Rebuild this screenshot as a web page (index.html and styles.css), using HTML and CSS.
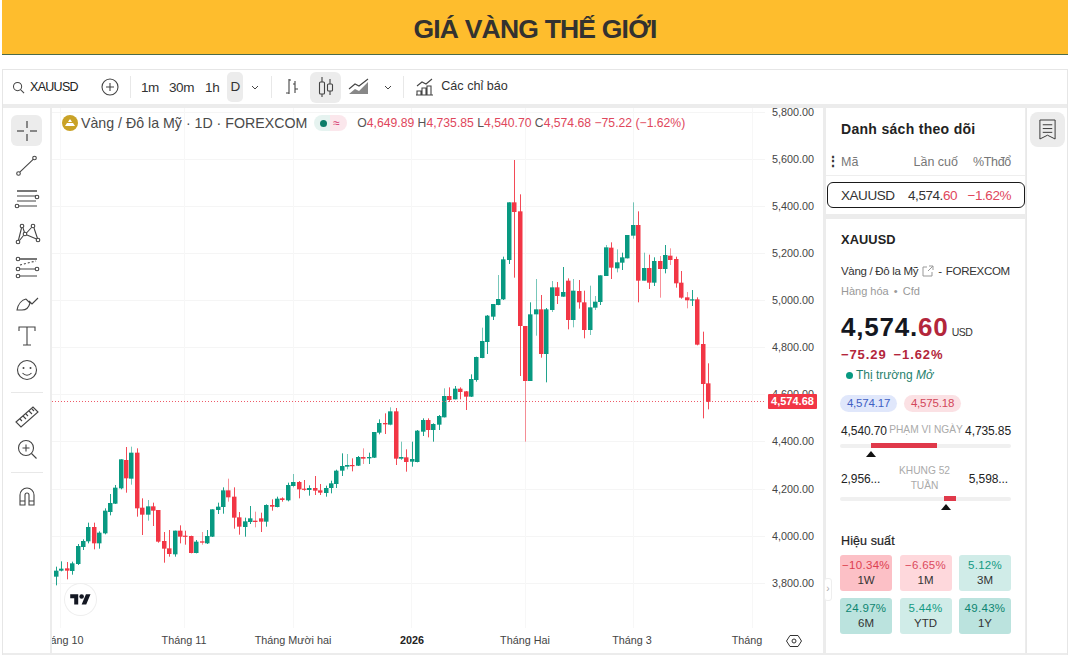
FILE: index.html
```html
<!DOCTYPE html>
<html lang="vi">
<head>
<meta charset="utf-8">
<title>Giá vàng thế giới</title>
<link rel="stylesheet" href="styles.css">
</head>
<body>
<header class="banner"><h1>GIÁ VÀNG THẾ GIỚI</h1></header>
<section class="widget">
  <div class="topbar">
    <svg class="ti search" viewBox="0 0 14 14"><circle cx="6" cy="6" r="4.4"/><path d="M9.2 9.2 13 13"/></svg>
    <span class="symbol">XAUUSD</span>
    <svg class="ti plus" viewBox="0 0 18 18"><circle cx="9" cy="9" r="8"/><path d="M9 5v8M5 9h8"/></svg>
    <i class="sep sep-a"></i>
    <span class="iv iv-1">1m</span><span class="iv iv-2">30m</span><span class="iv iv-3">1h</span><span class="iv-on">D</span>
    <svg class="ti chev" viewBox="0 0 8 5"><path d="M1 1l3 3 3-3"/></svg>
    <i class="sep sep-b"></i>
    <svg class="ti bars" viewBox="0 0 18 20"><path d="M7 2v15M7 3h2M7 16H4M13 4v12M13 12h3M13 7h-2"/></svg>
    <span class="cbtn"><svg class="ti" width="18" height="22" viewBox="0 0 18 22"><path d="M5 1v5M5 18v3M13 3v5M13 15v4"/><rect x="2.500" y="6" width="5" height="12" rx="1"/><rect x="10.500" y="8" width="5" height="7" rx="1"/></svg></span>
    <svg class="ti area" viewBox="0 0 22 18"><path class="fill" d="M1 16l6-5 4 2 9-9v12z"/><path d="M1 11l6-5 4 2 9-7"/></svg>
    <svg class="ti chev chev-b" viewBox="0 0 8 5"><path d="M1 1l3 3 3-3"/></svg>
    <i class="sep sep-c"></i>
    <svg class="ti ind" viewBox="0 0 20 20"><path d="M2 9l5-4 4 2 6-5M2 18v-4h4v4M7 18V11h4v7M12 18V9h4v9M1 18h17"/></svg>
    <span class="indlabel">Các chỉ báo</span>
  </div>
  <div class="main">
    <nav class="tools">
      <span class="tool tool-on"><svg viewBox="0 0 28 28"><path d="M14 4v7M14 17v7M4 14h7M17 14h7"/></svg></span>
      <span class="tool"><svg viewBox="0 0 28 28"><circle cx="5.500" cy="21.500" r="1.800"/><circle cx="21.500" cy="6" r="1.800"/><path d="M6.800 20.200 20.200 7.300"/></svg></span>
      <span class="tool"><svg viewBox="0 0 28 28"><path class="thick" d="M4 5h20"/><path d="M4 10h19M4 15h19M6 20h18"/><circle cx="24" cy="11" r="1.800"/><circle cx="4" cy="20" r="1.800"/></svg></span>
      <span class="tool"><svg viewBox="0 0 28 28"><circle cx="5" cy="22" r="1.800"/><circle cx="9" cy="6" r="1.800"/><circle cx="12" cy="14" r="1.800"/><circle cx="20" cy="6" r="1.800"/><circle cx="25" cy="20" r="1.800"/><path d="M5.500 20 8.500 8M6.500 20.500 10.500 15.500M10 8l1.500 4.500M13.500 13 18.500 7.500M21 8l3.500 10.500M14 15l9.500 4"/></svg></span>
      <span class="tool"><svg viewBox="0 0 28 28"><circle cx="5" cy="5" r="1.800"/><circle cx="5" cy="15" r="1.800"/><circle cx="24" cy="15" r="1.800"/><circle cx="5" cy="22" r="1.800"/><path class="thick" d="M7 5h17"/><path class="dash" d="M7 11l16-4"/><path d="M7 15h15M7 22h17"/></svg></span>
      <span class="tool"><svg viewBox="0 0 28 28"><path d="M4 22C5 16 9 12 13 11l4 4c-1 4-4 7-8 7zM16 13l3 3 6-6"/></svg></span>
      <span class="tool"><svg viewBox="0 0 28 28"><path d="M6 9V5h16v4M14 5v18M10 23h8"/></svg></span>
      <span class="tool"><svg viewBox="0 0 28 28"><circle cx="14" cy="14" r="9.500"/><circle class="dot" cx="10.500" cy="12" r="1"/><circle class="dot" cx="17.500" cy="12" r="1"/><path d="M9.500 17c2.500 3 6.500 3 9 0"/></svg></span>
      <i class="tsep"></i>
      <span class="tool"><svg viewBox="0 0 28 28"><path d="M3 20 20 5l5 5-17 15zM7 17l2 2M10 14l3 3M13 12l2 2M16 9l3 3M19 7l2 2"/></svg></span>
      <span class="tool"><svg viewBox="0 0 28 28"><circle cx="13" cy="12" r="7.500"/><path d="M13 8.500v7M9.500 12h7M18.500 17.500l5 5"/></svg></span>
      <i class="tsep"></i>
      <span class="tool"><svg viewBox="0 0 28 28"><path d="M7 23v-10a7 7 0 0 1 14 0v10h-5v-10a2 2 0 0 0-4 0v10zM7 19h5M16 19h5"/></svg></span>
    </nav>
    <div class="chart">
      <svg id="plot" class="plot" viewBox="52 108 771 545" width="771" height="545"></svg>
      <div class="legend">
        <svg class="gold" viewBox="0 0 16 16"><circle cx="8" cy="8" r="8"/><path d="M3 11l2-3h6l2 3zM6 7l1.500-2.500h1L10 7z"/></svg>
        <span class="lname">Vàng / Đô la Mỹ · 1D · FOREXCOM</span>
        <span class="lpill"><b class="ldot"></b><b class="lapprox">≈</b></span>
        <span class="ohlc"><i>O</i>4,649.89 <i>H</i>4,735.85 <i>L</i>4,540.70 <i>C</i>4,574.68 −75.22 (−1.62%)</span>
      </div>
      <div class="tvlogo"><svg viewBox="0 0 36 28"><path d="M14 22H7V11H0V4h14v18zM28 22h-8l7.500-18h8L28 22z"/><circle cx="20" cy="8" r="4"/></svg></div>
      <div class="lastprice">4,574.68</div>
    </div>
    <aside class="side">
      <div class="watch">
        <h2 class="wtitle">Danh sách theo dõi</h2>
        <div class="whead"><span class="wdots">⋮</span><span class="wc1">Mã</span><span class="wc2">Lần cuố</span><span class="wc3">%Thđổ</span></div>
        <div class="wrow"><span class="wc1">XAUUSD</span><span class="wc2">4,574.<em>60</em></span><span class="wc3"><em>−1.62%</em></span></div>
      </div>
      <div class="detail">
        <div class="dsym">XAUUSD</div>
        <div class="dname">Vàng / Đô la Mỹ <svg class="ext" viewBox="0 0 12 12"><path d="M5 2H1v9h9V7M7 1h4v4M11 1 6 6"/></svg> <span class="dash-s">-</span> FOREXCOM</div>
        <div class="dtype">Hàng hóa <span class="bull">•</span> Cfd</div>
        <div class="dprice">4,574.<em>60</em> <small>USD</small></div>
        <div class="dchg"><span>−75.29</span><span>−1.62%</span></div>
        <div class="dmkt"><b></b>Thị trường <i>Mở</i></div>
        <div class="dpills"><span class="pblue">4,574.17</span><span class="ppink">4,575.18</span></div>
        <div class="rrow"><span>4,540.70</span><label>PHẠM VI NGÀY</label><span>4,735.85</span></div>
        <div class="rbar"><i class="rf1"></i></div>
        <div class="tri tri1"></div>
        <div class="rrow rrow2"><span>2,956...</span><label>KHUNG 52 TUẦN</label><span>5,598...</span></div>
        <div class="rbar"><i class="rf2"></i></div>
        <div class="tri tri2"></div>
        <h3 class="perf">Hiệu suất</h3>
        <div class="pgrid">
          <div class="pc r2"><em>−10.34%</em><span>1W</span></div>
          <div class="pc r1"><em>−6.65%</em><span>1M</span></div>
          <div class="pc g1"><em>5.12%</em><span>3M</span></div>
          <div class="pc g2"><em>24.97%</em><span>6M</span></div>
          <div class="pc g1"><em>5.44%</em><span>YTD</span></div>
          <div class="pc g2"><em>49.43%</em><span>1Y</span></div>
        </div>
      </div>
      <div class="handle">›</div>
    </aside>
    <div class="strip">
      <span class="sbtn"><svg viewBox="0 0 20 24"><path d="M2 2h16v20l-8-4-8 4zM5 7h10M5 11h10M5 15h10"/></svg></span>
    </div>
  </div>
</section>
<script src="chart.js"></script>
</body>
</html>
```
FILE: styles.css
```css
* { box-sizing: border-box; }
html, body { margin: 0; height: 655px; overflow: hidden; background: #fff; font-family: "Liberation Sans", Arial, sans-serif; color: #222; }
body { padding-left: 2px; }
em { font-style: normal; }

.banner { height: 55px; background: #febd2d; border-bottom: 1px solid #4d6b4a; display: flex; align-items: center; justify-content: center; }
.banner h1 { margin: 0; font-size: 26.500px; line-height: 1; font-weight: 700; letter-spacing: -0.800px; color: #333230; position: relative; top: 2px; }

.widget { margin-top: 14px; height: 586px; background: #ececec; border: 1px solid #e6e6e6; border-bottom: 0; display: flex; flex-direction: column; }

.topbar { height: 34px; background: #fff; display: flex; align-items: center; flex: none; font-size: 13px; color: #333; }
.ti { fill: none; stroke: #444; stroke-width: 1.1; flex: none; }
.search { width: 13px; height: 13px; margin-left: 9px; }
.symbol { margin-left: 5px; font-size: 12.500px; width: 47px; letter-spacing: -0.700px; color: #222; }
.plus { width: 18px; height: 18px; margin-left: 24px; }
.sep { width: 1px; height: 22px; background: #e8e8e8; flex: none; }
.sep-a { margin: 0 10px 0 11px; }
.sep-b { margin-left: 12px; }
.sep-c { margin-left: 11px; }
.iv { font-size: 13.500px; letter-spacing: -0.400px; }
.iv-1 { margin-right: 10px; }
.iv-2 { margin-right: 11px; }
.iv-3 { margin-right: 8px; }
.iv-on { background: #ececec; border-radius: 5px; height: 30px; line-height: 30px; width: 16px; text-align: center; font-size: 13.500px; }
.chev { width: 8px; height: 5px; margin-left: 8px; stroke-width: 1; }
.chev-b { margin-left: 14px; }
.bars { width: 18px; height: 20px; margin-left: 10px; }
.cbtn { width: 31px; height: 31px; background: #ececec; border-radius: 6px; display: flex; align-items: center; justify-content: center; margin-left: 10px; }
.area { width: 22px; height: 18px; margin-left: 7px; }
.area .fill { fill: #888; stroke: none; }
.ind { width: 20px; height: 20px; margin-left: 11px; }
.indlabel { margin-left: 6px; font-size: 12.600px; position: relative; top: -1px; }

.main { flex: 1; min-height: 0; margin-top: 4px; display: flex; align-items: stretch; }

.tools { width: 47px; flex: none; background: #fff; margin-right: 2px; display: flex; flex-direction: column; align-items: center; padding-top: 7px; height: 545px; }
.tool { width: 31px; height: 31px; flex: none; display: flex; align-items: center; justify-content: center; margin-bottom: 3px; border-radius: 6px; }
.tool svg { width: 28px; height: 28px; fill: none; stroke: #444; stroke-width: 1.100; }
.tool .thick { stroke-width: 2; stroke: #777; }
.tool .dash { stroke-dasharray: 2 2; }
.tool .dot { fill: #444; stroke: none; }
.tool-on { background: #ececec; margin-bottom: 4px; }
.tool-on svg { stroke: #666; stroke-width: 1.500; }
.tsep { width: 32px; height: 1px; background: #e8e8e8; margin: 4px 0 7px; flex: none; }

.chart { width: 771px; height: 545px; flex: none; background: #fff; position: relative; margin-right: 3px; overflow: hidden; }
.plot { display: block; }
.plot text { font-family: "Liberation Sans", Arial, sans-serif; font-size: 10.800px; fill: #444; }
.plot .tm { text-anchor: middle; }
.plot .yr { font-weight: 700; fill: #222; }
.gear { fill: none; stroke: #333; stroke-width: 1; }

.legend { position: absolute; left: 10px; top: 7px; height: 16px; display: flex; align-items: center; white-space: nowrap; }
.gold { width: 16px; height: 16px; fill: #c9a227; flex: none; }
.gold path { fill: #fff; }
.lname { font-size: 14.200px; color: #4a4a4a; margin-left: 3px; }
.lpill { margin-left: 7px; width: 33px; height: 16px; border-radius: 8px; background: linear-gradient(90deg, #e6f3f0 50%, #fbe7ec 50%); display: flex; align-items: center; }
.ldot { width: 7px; height: 7px; border-radius: 50%; background: #0c7d68; margin-left: 6px; }
.lapprox { color: #d6336c; font-size: 12px; margin-left: 6px; font-weight: 400; }
.ohlc { margin-left: 10px; font-size: 12.200px; color: #e0475c; }
.ohlc i { font-style: normal; color: #555; }

.tvlogo { position: absolute; left: 13px; top: 476px; width: 31px; height: 31px; border-radius: 50%; background: #fff; box-shadow: 0 0 0 1px #eee; display: flex; align-items: center; justify-content: center; }
.tvlogo svg { width: 21px; height: 16px; fill: #131722; }
.lastprice { position: absolute; left: 716px; top: 286px; width: 49px; height: 15px; line-height: 15px; background: #f23645; color: #fff; font-size: 11px; font-weight: 700; text-align: center; border-radius: 1px; }

.side { width: 199px; flex: none; height: 545px; display: flex; flex-direction: column; position: relative; background: #ececec; }
.watch { background: #fff; height: 106px; flex: none; position: relative; }
.wtitle { margin: 0; padding: 13px 0 0 15px; font-size: 14px; line-height: 16px; letter-spacing: 0.300px; color: #222; font-weight: 700; }
.whead, .wrow { display: flex; align-items: center; position: relative; }
.whead { margin-top: 12px; height: 27px; color: #777; border-bottom: 1px solid #eee; font-size: 12.500px; }
.wdots { position: absolute; left: 0; top: 4px; font-weight: 700; color: #333; font-size: 14px; }
.wc1 { position: absolute; left: 15px; }
.wc2 { position: absolute; right: 67px; }
.wc3 { position: absolute; right: 14px; letter-spacing: -0.300px; }
.wrow { margin: 6px 0 0 1px; width: 198px; height: 26px; border: 1px solid #1a1a1a; border-radius: 6px; font-size: 13.500px; letter-spacing: -0.450px; color: #333; }
.wrow .wc1 { left: 13px; }
.wrow .wc2 { right: 67px; }
.wrow .wc3 { right: 13px; letter-spacing: -0.450px; }
.wrow em { color: #e0475c; }

.detail { background: #fff; margin-top: 5px; flex: 1; padding: 13px 14px 0 15px; position: relative; }
.dsym { font-size: 12.800px; font-weight: 700; line-height: 16px; color: #222; letter-spacing: 0.100px; }
.dname { margin-top: 15px; font-size: 11.500px; line-height: 16px; letter-spacing: -0.300px; color: #333; display: flex; align-items: center; gap: 4px; white-space: nowrap; }
.ext { width: 12px; height: 12px; fill: none; stroke: #999; stroke-width: 1; flex: none; }
.dtype { margin-top: 4px; font-size: 11px; line-height: 16px; color: #999; }
.bull { margin: 0 2px; }
.dprice { margin-top: 13px; font-size: 26px; line-height: 30px; font-weight: 700; letter-spacing: 0.800px; color: #14171f; white-space: nowrap; }
.dprice em { color: #b3263b; }
.dprice small { font-size: 10.500px; font-weight: 400; letter-spacing: -0.500px; color: #333; margin-left: -5px; }
.dchg { margin-top: 0; font-size: 13px; line-height: 16px; font-weight: 700; color: #b3263b; letter-spacing: 0.900px; display: flex; gap: 7px; }
.dmkt { margin-top: 3px; font-size: 12px; line-height: 18px; color: #1f7f6d; display: flex; align-items: center; gap: 3px; padding-left: 5px; white-space: pre; }
.dmkt b { width: 7px; height: 7px; border-radius: 50%; background: #089981; }
.dmkt i { margin-left: -3px; }
.dpills { margin: 11px 0 0 -1px; display: flex; gap: 7px; font-size: 11.500px; letter-spacing: -0.200px; }
.dpills span { width: 57px; height: 17px; line-height: 17px; border-radius: 9px; text-align: center; }
.pblue { background: #e0e7fb; color: #3f5fc4; }
.ppink { background: #fbe1e4; color: #d2475a; }
.rrow { margin-top: 11px; display: flex; align-items: center; justify-content: space-between; font-size: 12px; line-height: 16px; height: 16px; color: #222; letter-spacing: -0.100px; }
.rrow label { font-size: 10.200px; color: #aaa; letter-spacing: 0; white-space: nowrap; position: relative; top: -1px; }
.rrow2 { margin-top: 7px; height: 30px; padding: 0 3px 0 0; }
.rrow2 label { width: 64px; text-align: center; line-height: 15px; white-space: normal; }
.rbar { height: 4px; background: #f0f0f0; border-radius: 2px; margin-top: 5px; margin-left: -1px; position: relative; }
.rrow2 + .rbar { margin-top: 3px; }
.rbar i { position: absolute; top: -1px; bottom: 0; background: #e0394a; }
.rf1 { left: 31px; width: 66px; }
.rf2 { left: 104px; width: 12px; top: -2px; }
.tri { position: relative; width: 0; height: 0; margin-top: 3px; border-left: 5px solid transparent; border-right: 5px solid transparent; border-bottom: 6px solid #111; }
.tri1 { left: 25px; }
.tri2 { left: 100px; }
.perf { margin: 23px 0 0; font-size: 12.500px; line-height: 16px; font-weight: 400; -webkit-text-stroke: 0.200px #222; color: #222; letter-spacing: 0.100px; }
.pgrid { margin: 6px 0 0 -1px; display: grid; grid-template-columns: 52px 52px 52px; grid-auto-rows: 36px; column-gap: 7.500px; row-gap: 7px; }
.pc { border-radius: 3px; display: flex; flex-direction: column; align-items: center; justify-content: center; font-size: 11.500px; line-height: 15px; color: #333; }
.pc em { letter-spacing: 0.300px; }
.r1 { background: #fed8dc; } .r1 em { color: #dc4a5c; }
.r2 { background: #fcc0c6; } .r2 em { color: #dc3f50; }
.g1 { background: #d0ece8; } .g1 em { color: #139a83; }
.g2 { background: #bbe3de; } .g2 em { color: #0d8571; }
.handle { position: absolute; left: -2px; top: 470px; width: 8px; height: 23px; background: #fff; border: 1px solid #eee; border-radius: 3px; font-size: 10px; line-height: 20px; text-align: center; color: #aaa; }

.strip { flex: 1; height: 545px; background: #fff; border-left: 1px solid #e8e8e8; padding: 4px 0 0 3px; margin-left: 1px; }
.sbtn { display: flex; width: 35px; height: 35px; background: #ececec; border-radius: 8px; align-items: center; justify-content: center; }
.sbtn svg { width: 19px; height: 23px; fill: none; stroke: #333; stroke-width: 1; }
```
FILE: chart.js
```js
// Each block: [y offset, first index, rows]. A row is colour, high, top, bottom, low
// measured in thirds of a pixel from the offset. A sixth value marks a faint wick.
var blocks = [
  [400, 0, [
    'g,500,512,530,556','g,484,506,512,514','r,486,505,512,538','g,485,490,513,524','g,432,438,492,495',
    'g,418,423,441,450','g,368,381,424,430','r,368,381,430,448','g,394,398,430,446','g,325,332,400,403',
    'g,282,309,336,346','g,255,263,311,312','g,178,178,265,268','r,141,180,235,278','g,140,158,236,254,1',
    'r,145,158,325,350','r,295,323,344,405','g,300,319,344,362,1','r,308,319,332,378','r,330,330,425,428',
    'r,396,423,446,488','r,390,445,462,470','g,392,392,463,470','r,376,392,410,430','r,392,407,410,434',
    'r,407,408,459,460','g,420,425,459,460','r,396,424,428,434,1','g,390,408,430,432','g,328,328,410,411',
    'g,308,320,330,342','g,262,271,321,341','r,236,271,292,305,1','r,262,290,353,386','r,336,352,380,404',
    'g,353,364,381,410','g,318,355,366,372','r,335,362,366,382,1','r,338,355,365,396','g,313,315,365,380',
    'r,298,315,320,332','g,290,296,321,322','r,292,295,300,305','g,248,255,301,304','g,222,246,258,262,1',
    'r,243,246,268,295','r,240,266,268,272','g,256,264,270,287','r,228,264,272,285','r,252,271,278,285',
    'g,257,264,279,290','g,242,250,264,280','g,209,212,252,264','g,160,198,212,228','g,162,195,200,208,1',
    'r,175,195,198,214','g,168,171,197,198','r,145,171,176,192,1','g,158,171,175,192','g,96,96,173,174',
    'g,58,69,98,103','r,40,69,73,102','g,22,34,74,76,1','r,24,34,176,195','g,125,171,176,180,1','r,148,172,186,215'
  ]],
  [280, 66, [
    'g,485,537,545,560','g,450,452,546,547','g,415,420,455,468','r,415,420,450,472','g,430,432,450,485',
    'g,405,408,434,450','g,325,348,412,413,1','r,322,348,360,366','g,318,326,358,358','r,322,326,336,358',
    'r,333,334,350,390','g,283,297,350,351','g,230,231,300,305','g,143,183,234,235,1','g,105,107,186,222'
  ]],
  [150, 81, [
    'g,462,462,500,510','g,375,447,465,466,1','g,320,328,448,450','g,157,157,330,342','r,30,157,186,383'
  ]],
  [150, 86, ['r,133,184,528,678']],
  [280, 87, [
    'r,138,138,303,485,1','g,67,103,303,303','g,-3,88,103,167,1','r,45,88,222,233','g,84,88,222,307',
    'g,3,22,90,96,1','r,6,22,48,72','g,-39,36,50,50','r,-5,2,120,148','g,-3,32,120,142,1',
    'r,-0,33,67,86','r,32,67,150,175','g,17,82,150,165,1'
  ]],
  [150, 100, [
    'g,438,455,473,480,1','g,376,376,456,465','g,285,292,378,378,1','r,277,293,353,387','g,298,337,355,367,1',
    'g,308,322,338,360','g,255,255,325,325','g,157,225,257,266,1','r,184,225,392,457','g,308,354,392,392,1',
    'r,314,354,398,417','g,322,333,398,408','r,318,333,357,443,1'
  ]],
  [240, 113, [
    'g,15,45,87,100','r,25,47,60,75,1','r,50,57,130,143','r,93,128,173,176','r,156,172,181,205,1',
    'g,150,178,180,198','r,172,178,314,316','r,275,312,432,535','r,370,430,486,508'
  ]]
];

var NS = 'http://www.w3.org/2000/svg';
var plot = document.getElementById('plot');
var GREEN = '#089981', RED = '#f23645';

function el(name, attrs, text) {
  var node = document.createElementNS(NS, name);
  for (var k in attrs) node.setAttribute(k, attrs[k]);
  if (text) node.textContent = text;
  plot.appendChild(node);
  return node;
}

var prices = [['5,800.00',112],['5,600.00',159],['5,400.00',206],['5,200.00',253],['5,000.00',300],['4,800.00',347],
  ['4,600.00',394],['4,400.00',441],['4,200.00',489],['4,000.00',536],['3,800.00',583]];
prices.forEach(function (p) {
  el('rect', { x: 52, y: p[1], width: 713, height: 1, fill: '#f5f5f5' });
});
[60, 184, 293, 411, 525, 633, 752].forEach(function (x) {
  el('rect', { x: x, y: 108, width: 1, height: 520, fill: '#f7f7f7' });
});
prices.forEach(function (p) {
  el('text', { x: 772, y: p[1] + 4 }, p[0]);
});

blocks.forEach(function (b) {
  b[2].forEach(function (row, n) {
    var v = row.split(',');
    var i = b[1] + n;
    var x = Math.round(56 + 5.39 * i);
    var c = v[0] === 'g' ? GREEN : RED;
    var ty = function (z) { return b[0] + Number(z) / 3; };
    var high = ty(v[1]), top = ty(v[2]), bot = ty(v[3]), low = ty(v[4]);
    el('rect', { x: x, y: high, width: 1, height: low - high, fill: c, opacity: v[5] ? 0.55 : 0.9 });
    el('rect', { x: x - 2, y: top, width: 4.5, height: Math.max(bot - top, 1.2), fill: c });
  });
});

el('line', { x1: 52, x2: 765, y1: 401.5, y2: 401.5, stroke: '#ee5a68', 'stroke-width': 1, 'stroke-dasharray': '1 2' });

[['áng 10',67],['Tháng 11',184],['Tháng Mười hai',293],['2026',412,'yr'],['Tháng Hai',525],['Tháng 3',632],['Tháng',747]].forEach(function (t) {
  el('text', { x: t[1], y: 644, 'class': 'tm ' + (t[2] || '') }, t[0]);
});

el('circle', { cx: 794, cy: 641, r: 2, 'class': 'gear' });
el('path', { d: 'M790 635.500h8l3.500 5.500-3.500 5.500h-8l-3.500-5.500z', 'class': 'gear' });
```
